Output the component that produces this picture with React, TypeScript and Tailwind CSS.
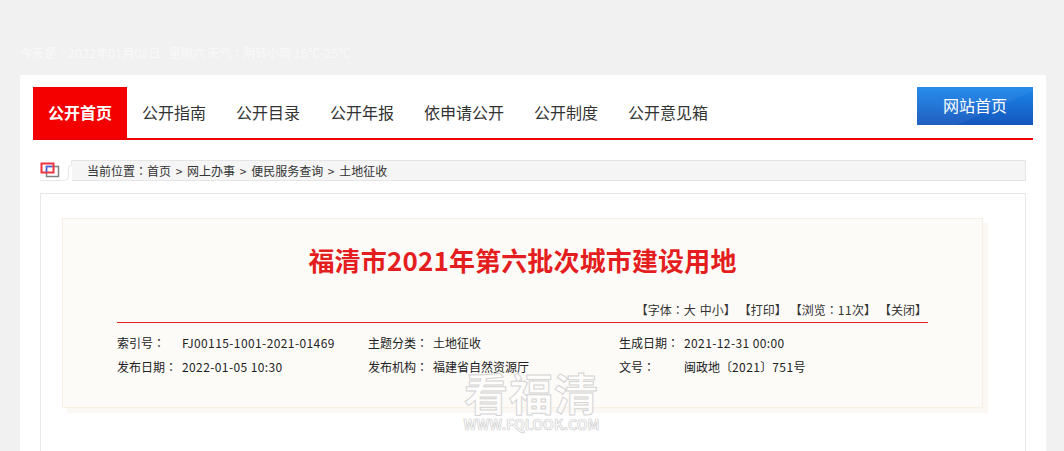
const cjk = "font-['Noto_Sans_CJK_SC','Microsoft_YaHei',sans-serif]";

const navItems = ["公开首页", "公开指南", "公开目录", "公开年报", "依申请公开", "公开制度", "公开意见箱"];

// digits run a little wider in the original font
const Num = ({ children }: { children: React.ReactNode }) => (
  <span className="tracking-[0.4px]">{children}</span>
);

// full-width colon sits centred in the original
const Colon = () => <span className="font-['Noto_Sans_CJK_TC']">：</span>;

const Sep = () => <span className="mx-[4.7px]">&gt;</span>;

const metaRows = [
  [
    ["索引号", <Num>FJ00115-1001-2021-01469</Num>],
    ["主题分类", "土地征收"],
    ["生成日期", <Num>2021-12-31 00:00</Num>],
  ],
  [
    ["发布日期", <Num>2022-01-05 10:30</Num>],
    ["发布机构", "福建省自然资源厅"],
    ["文号", <>闽政地〔<Num>2021</Num>〕<Num>751</Num>号</>],
  ],
] as const;

export default function App() {
  return (
    <div className={`relative h-[451px] overflow-hidden bg-[#f1f1f1] ${cjk}`}>
      <div className="h-[75px] pl-5 pt-[44px] text-xs leading-[18px] text-[#f9f9f9]">
        今天是<Colon /><Num>2022</Num>年<Num>01</Num>月<Num>08</Num>日&nbsp;&nbsp;&nbsp;星期六 天气<Colon />阴转小雨 <Num>16</Num>℃-<Num>25</Num>℃
      </div>

      <div className="mx-5 h-[400px] w-[1026px] bg-white px-[13px] pt-3">
        {/* nav */}
        <div className="flex h-[53px] border-b-2 border-[#ee0000]">
          {navItems.map((item, i) => (
            <div
              key={item}
              className={
                i === 0
                  ? "h-[51px] bg-[#f40000] px-[15px] text-base font-bold leading-[50px] text-white"
                  : "h-[51px] px-[15px] text-base leading-[50px] text-[#333]"
              }
            >
              {item}
            </div>
          ))}
          <div className="ml-auto h-[38px] w-[116px] bg-[linear-gradient(156deg,rgba(255,255,255,0.05)_62%,transparent_62%),linear-gradient(180deg,#1b87ea,#1556bd)] text-center text-base leading-[36px] text-white">
            网站首页
          </div>
        </div>

        {/* breadcrumb */}
        <div className="ml-[7px] mt-5 flex h-[21px] w-[986px] text-xs text-[#333]">
          <div className="flex h-[21px] w-[32px] shrink-0 items-end">
            <svg width="32" height="21" viewBox="0 0 32 21">
              <path d="M0 20.5H24L28.5 18.5V6.5L31.5 5.5V.5H32" fill="none" stroke="#e8e8e8" />
              <rect x="6.5" y="6.5" width="12" height="10" fill="none" stroke="#808080" strokeWidth="1.5" />
              <rect x="1.5" y="3.5" width="12" height="9" fill="none" stroke="#ee3340" strokeWidth="2" />
              <path d="M6.5 12V6.5H12" fill="none" stroke="#4a63e0" strokeWidth="1.5" />
            </svg>
          </div>
          <div className="flex-1 border border-l-0 border-[#e5e5e5] bg-[#f5f5f5] pl-[15px] leading-[19px]">
            当前位置<Colon />首页<Sep />网上办事<Sep />便民服务查询<Sep />土地征收
          </div>
        </div>

        {/* article box */}
        <div className="ml-[7px] mt-3 h-[400px] w-[986px] border border-[#e8e8e8] px-[21px] pt-6">
          <div className="h-[190px] w-[921px] border border-[#f8f0e4] bg-[#fdfbf8] px-[54px] pt-[19px] shadow-[5px_5px_0_#fbf8f3]">
            <h1 className="h-[48px] text-center text-[26px] font-bold leading-[44px] tracking-[0.15px] text-[#e41e1e]">
              福清市2021年第六批次城市建设用地
            </h1>
            <div className="mt-[15px] flex h-[22px] w-[811px] justify-end gap-[3px] border-b border-[#e71f19] pr-[1px] text-xs leading-[18px] text-[#333]">
              <span>【字体<Colon /><span className="mr-1">大</span>中小】</span>
              <span>【打印】</span>
              <span>【浏览<Colon /><Num>11</Num>次】</span>
              <span>【关闭】</span>
            </div>
            <div className="mt-2 text-xs leading-6 text-[#222]">
              {metaRows.map((row, r) => (
                <div key={r} className="flex">
                  {row.map(([label, value]) => (
                    <div key={label} className="flex w-[251px]">
                      <span className="w-[65px] shrink-0">{label}<Colon /></span>
                      <span>{value}</span>
                    </div>
                  ))}
                </div>
              ))}
            </div>
          </div>
        </div>
      </div>

      {/* watermark */}
      <div className="absolute left-[463px] top-[368px] w-[137px] text-center">
        <div className="text-[44px] font-bold leading-[48px] tracking-[1px] text-white/70 [-webkit-text-stroke:1px_#d4d4d4]">
          看福清
        </div>
        <div className="text-[14px] font-bold leading-[16px] text-white/70 [-webkit-text-stroke:0.7px_#cfcfcf]">
          WWW.FQLOOK.COM
        </div>
      </div>
    </div>
  );
}
